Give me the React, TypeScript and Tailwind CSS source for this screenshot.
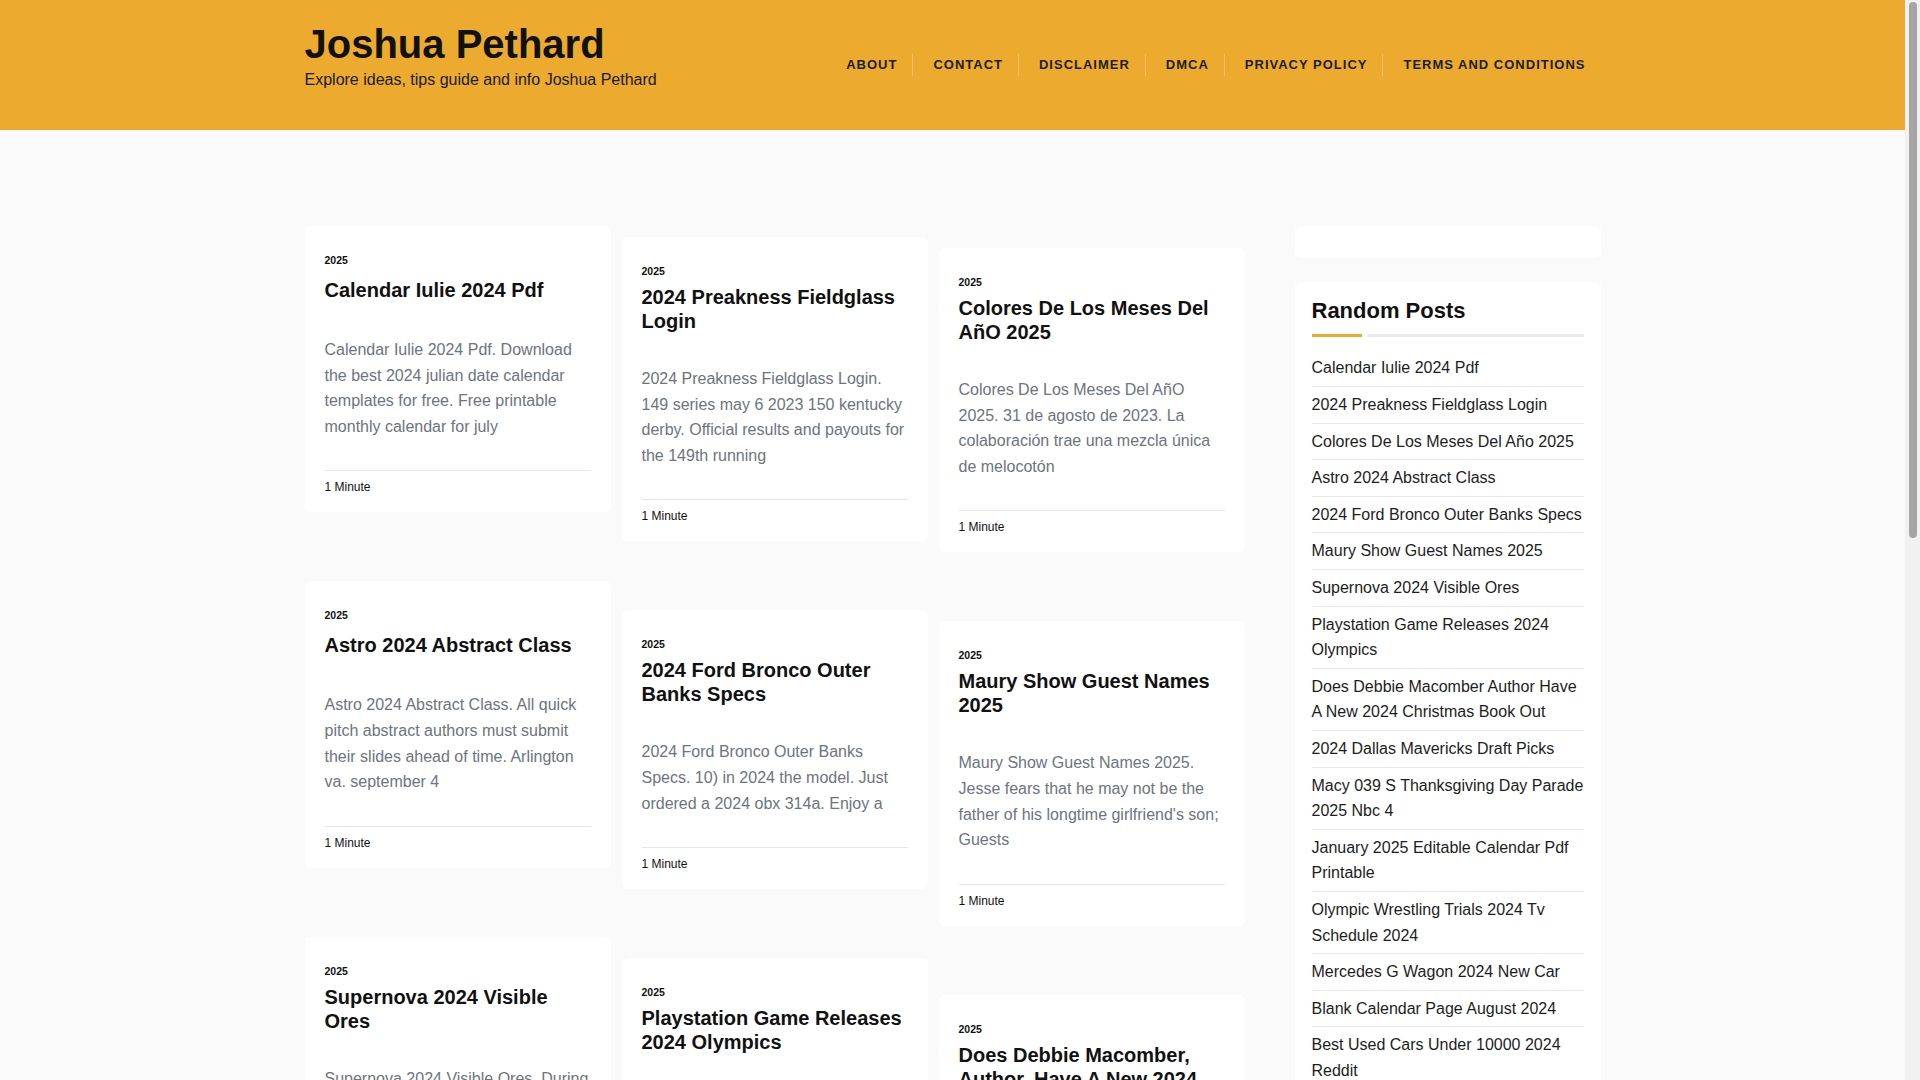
import React from "react";

type Post = {
  title: string;
  excerpt: string;
  single?: boolean;
};

const col1: Post[] = [
  {
    title: "Calendar Iulie 2024 Pdf",
    excerpt:
      "Calendar Iulie 2024 Pdf. Download the best 2024 julian date calendar templates for free. Free printable monthly calendar for july",
    single: true,
  },
  {
    title: "Astro 2024 Abstract Class",
    excerpt:
      "Astro 2024 Abstract Class. All quick pitch abstract authors must submit their slides ahead of time. Arlington va. september 4",
    single: true,
  },
  {
    title: "Supernova 2024 Visible Ores",
    excerpt:
      "Supernova 2024 Visible Ores. During the next weeks the bright star will be visible to the naked eye in the night sky",
  },
  {
    title: "2024 Dallas Mavericks Draft Picks",
    excerpt:
      "2024 Dallas Mavericks Draft Picks. The mavericks hold two picks in the second round of this year's draft",
  },
];

const col2: Post[] = [
  {
    title: "2024 Preakness Fieldglass Login",
    excerpt:
      "2024 Preakness Fieldglass Login. 149 series may 6 2023 150 kentucky derby. Official results and payouts for the 149th running",
  },
  {
    title: "2024 Ford Bronco Outer Banks Specs",
    excerpt:
      "2024 Ford Bronco Outer Banks Specs. 10) in 2024 the model. Just ordered a 2024 obx 314a. Enjoy a",
  },
  {
    title: "Playstation Game Releases 2024 Olympics",
    excerpt:
      "Playstation Game Releases 2024 Olympics. The official video game of the olympic games arrives this summer on every console",
  },
  {
    title: "Macy 039 S Thanksgiving Day Parade 2025 Nbc 4",
    excerpt:
      "Macy 039 S Thanksgiving Day Parade 2025 Nbc 4. Watch the balloons, floats and performers live from new york city",
  },
];

const col3: Post[] = [
  {
    title: "Colores De Los Meses Del AñO 2025",
    excerpt:
      "Colores De Los Meses Del AñO 2025. 31 de agosto de 2023. La colaboración trae una mezcla única de melocotón",
  },
  {
    title: "Maury Show Guest Names 2025",
    excerpt:
      "Maury Show Guest Names 2025. Jesse fears that he may not be the father of his longtime girlfriend's son; Guests",
  },
  {
    title: "Does Debbie Macomber, Author, Have A New 2024 Christmas Book Out?",
    excerpt:
      "Does Debbie Macomber, Author, Have A New 2024 Christmas Book Out. The beloved author returns with a new holiday story",
  },
  {
    title: "January 2025 Editable Calendar Pdf Printable",
    excerpt:
      "January 2025 Editable Calendar Pdf Printable. Download editable monthly templates with holidays for free",
  },
];

const randomPosts = [
  "Calendar Iulie 2024 Pdf",
  "2024 Preakness Fieldglass Login",
  "Colores De Los Meses Del Año 2025",
  "Astro 2024 Abstract Class",
  "2024 Ford Bronco Outer Banks Specs",
  "Maury Show Guest Names 2025",
  "Supernova 2024 Visible Ores",
  "Playstation Game Releases 2024 Olympics",
  "Does Debbie Macomber Author Have A New 2024 Christmas Book Out",
  "2024 Dallas Mavericks Draft Picks",
  "Macy 039 S Thanksgiving Day Parade 2025 Nbc 4",
  "January 2025 Editable Calendar Pdf Printable",
  "Olympic Wrestling Trials 2024 Tv Schedule 2024",
  "Mercedes G Wagon 2024 New Car",
  "Blank Calendar Page August 2024",
  "Best Used Cars Under 10000 2024 Reddit",
  "2025 Toyota Camry Hybrid Review",
  "Printable Calendar 2025 With Holidays",
];

const navItems = [
  "ABOUT",
  "CONTACT",
  "DISCLAIMER",
  "DMCA",
  "PRIVACY POLICY",
  "TERMS AND CONDITIONS",
];

function Card({ post }: { post: Post }) {
  return (
    <article className="bg-white rounded-md px-[20px] pt-[26px] pb-[16px]">
      <div className="text-[10.5px] leading-[16px] font-bold text-[#111]">2025</div>
      <h2
        className={
          post.single
            ? "mt-[10px] text-[20px] leading-[24px] font-bold text-[#111]"
            : "mt-[6px] text-[20px] leading-[24px] font-bold text-[#111]"
        }
      >
        {post.title}
      </h2>
      <p
        className={
          post.single
            ? "mt-[35px] text-[16px] leading-[25.6px] text-[#6d747d]"
            : "mt-[33px] text-[16px] leading-[25.6px] text-[#6d747d]"
        }
      >
        {post.excerpt}
      </p>
      <div className="mt-[31px] border-t border-[#e6e6e6] pt-[7px] text-[12px] leading-[18px] text-[#111]">
        1 Minute
      </div>
    </article>
  );
}

export default function App() {
  return (
    <div className="flex min-h-screen bg-[#fafafa] font-['Liberation_Sans',Arial,sans-serif]">
      <div className="flex-1 min-w-0">
        <header className="bg-[#ecab2e] h-[130px]">
          <div className="w-[1296px] mx-auto flex justify-between items-start pt-[20px]">
            <div>
              <h1 className="text-[40px] leading-[48px] font-bold text-[#111]">Joshua Pethard</h1>
              <p className="text-[16px] leading-[24px] text-[#1a1a1a]">
                Explore ideas, tips guide and info Joshua Pethard
              </p>
            </div>
            <nav className="mt-[34px] flex">
              {navItems.map((item, i) => (
                <a
                  key={item}
                  href="#"
                  className={
                    i === 0
                      ? "pr-[15px] text-[13px] leading-[22px] font-bold tracking-[1px] text-[#1c1c1c]"
                      : "pl-[20px] pr-[15px] border-l border-white/25 text-[13px] leading-[22px] font-bold tracking-[1px] text-[#1c1c1c]"
                  }
                >
                  {item}
                </a>
              ))}
            </nav>
          </div>
        </header>

        <main className="w-[1296px] mx-auto flex items-start gap-[50px] pt-[96px] pb-[70px]">
          <div className="w-[940px] flex items-start gap-[11px]">
            <div className="w-[306px] flex flex-col gap-[69px]">
              {col1.map((p) => (
                <Card key={p.title} post={p} />
              ))}
            </div>
            <div className="w-[306px] flex flex-col gap-[69px] mt-[11px]">
              {col2.map((p) => (
                <Card key={p.title} post={p} />
              ))}
            </div>
            <div className="w-[306px] flex flex-col gap-[69px] mt-[22px]">
              {col3.map((p) => (
                <Card key={p.title} post={p} />
              ))}
            </div>
          </div>

          <aside className="w-[306px] flex flex-col gap-[24px]">
            <div className="h-[32px] bg-white rounded-md" />
            <div className="bg-white rounded-md px-[17px] pt-[16px] pb-[20px]">
              <h3 className="text-[22px] leading-[26.4px] font-bold text-[#111]">Random Posts</h3>
              <div className="mt-[10px] flex gap-[5px]">
                <div className="w-[50px] h-[3px] bg-[#ecab2e]" />
                <div className="flex-1 h-[3px] bg-[#ececec]" />
              </div>
              <ul className="mt-[13px]">
                {randomPosts.map((t) => (
                  <li
                    key={t}
                    className="py-[5px] border-b border-[#e8e8e8] last:border-b-0 text-[16px] leading-[25.6px] text-[#1d1d1d]"
                  >
                    <a href="#">{t}</a>
                  </li>
                ))}
              </ul>
            </div>
          </aside>
        </main>
      </div>
      <div className="w-[15px] shrink-0 bg-[#f1f1f1]">
        <div className="mt-[2px] mx-auto w-[8px] h-[536px] rounded-full bg-[#a5a5a5]" />
      </div>
    </div>
  );
}
